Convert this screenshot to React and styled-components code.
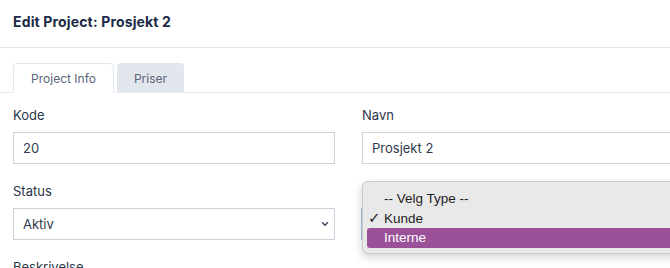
import React from 'react';
import styled, { createGlobalStyle } from 'styled-components';

const GlobalStyle = createGlobalStyle`
  html, body {
    margin: 0;
    padding: 0;
    background: #ffffff;
    overflow: hidden;
  }
  body {
    font-family: Inter, "Open Sans", sans-serif;
    -webkit-font-smoothing: antialiased;
  }
`;

const Page = styled.div`
  width: 697px;
  height: 268px;
  overflow: hidden;
  background: #ffffff;
`;

const Header = styled.div`
  height: 47px;
  padding: 0 13px;
  display: flex;
  align-items: center;
  border-bottom: 1px solid #e3e6f0;
`;

const Title = styled.h1`
  margin: 0;
  font-size: 14px;
  font-weight: 700;
  color: #1b2a47;
  letter-spacing: 0.15px;
  position: relative;
  top: -2px;
`;

const TabBar = styled.div`
  display: flex;
  gap: 3px;
  padding: 0 13px;
  margin-top: 15px;
  border-bottom: 1px solid #e6eaf1;
`;

const Tab = styled.div`
  height: 30px;
  width: ${(p) => p.w}px;
  box-sizing: border-box;
  display: flex;
  align-items: center;
  justify-content: center;
  font-size: 12px;
  color: #5b6579;
  border-radius: 4px 4px 0 0;
  margin-bottom: -1px;
  background: ${(p) => (p.active ? '#ffffff' : '#e2e6ed')};
  border: 1px solid ${(p) => (p.active ? '#e3e8ef' : '#e2e6ed')};
  border-bottom-color: ${(p) => (p.active ? '#ffffff' : '#e6eaf1')};
`;

const Form = styled.div`
  display: grid;
  grid-template-columns: 322px 322px;
  column-gap: 27px;
  row-gap: 19px;
  padding: 14px 13px 0;
`;

const Field = styled.div`
  display: flex;
  flex-direction: column;
  position: relative;
`;

const Label = styled.label`
  font-size: 13px;
  line-height: 16px;
  color: #2b3648;
  margin-bottom: 9px;
`;

const Input = styled.div`
  height: 32px;
  box-sizing: border-box;
  border: 1px solid #cdd4de;
  background: #ffffff;
  display: flex;
  align-items: center;
  padding: 0 5px 0 9px;
  font-size: 13px;
  color: #2f3a4e;
  justify-content: space-between;
  box-shadow: ${(p) => (p.focused ? '-1px 0 0 0 #a9c4e6' : 'none')};
`;

const Chevron = styled.svg`
  width: 8px;
  height: 6px;
`;

const Popup = styled.div`
  position: absolute;
  left: 0;
  top: -2px;
  width: 340px;
  box-sizing: border-box;
  padding: 7px 4px 5px;
  background: #e9e9e9;
  border: 1px solid #cacaca;
  border-radius: 6px;
  box-shadow: 0 3px 10px rgba(0, 0, 0, 0.18);
  font-family: "Liberation Sans", Arial, sans-serif;
  z-index: 5;
`;

const Option = styled.div`
  height: 19.5px;
  display: flex;
  align-items: center;
  padding-left: 17px;
  font-size: 13.5px;
  color: ${(p) => (p.selected ? '#ffffff' : '#1e1e1e')};
  background: ${(p) => (p.selected ? '#9b5197' : 'transparent')};
  border-radius: 3px;
  position: relative;
`;

const Check = styled.span`
  position: absolute;
  left: 1px;
  font-size: 15px;
  font-weight: 700;
  font-family: "DejaVu Sans", sans-serif;
`;

const ChevronIcon = () => (
  <Chevron viewBox="0 0 8 6">
    <path d="M1 1.2l3 3 3-3" fill="none" stroke="#3b475f" strokeWidth="1.4" />
  </Chevron>
);

export default function App() {
  return (
    <Page>
      <GlobalStyle />
      <Header>
        <Title>Edit Project: Prosjekt 2</Title>
      </Header>
      <TabBar>
        <Tab active w={101}>Project Info</Tab>
        <Tab w={67}>Priser</Tab>
      </TabBar>
      <Form>
        <Field>
          <Label>Kode</Label>
          <Input>20</Input>
        </Field>
        <Field>
          <Label>Navn</Label>
          <Input>Prosjekt 2</Input>
        </Field>
        <Field>
          <Label>Status</Label>
          <Input>
            Aktiv
            <ChevronIcon />
          </Input>
        </Field>
        <Field>
          <Label>Type</Label>
          <Input focused>
            Kunde
            <ChevronIcon />
          </Input>
          <Popup>
            <Option>-- Velg Type --</Option>
            <Option>
              <Check>✓</Check>Kunde
            </Option>
            <Option selected>Interne</Option>
          </Popup>
        </Field>
        <Field>
          <Label>Beskrivelse</Label>
        </Field>
      </Form>
    </Page>
  );
}
